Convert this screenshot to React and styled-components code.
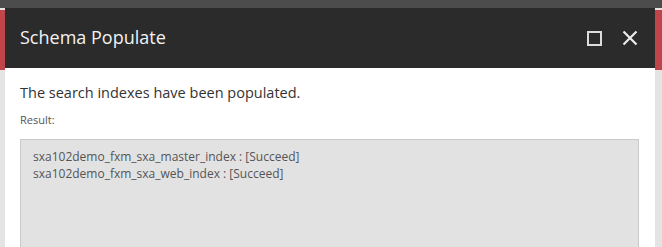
import React from "react";
import styled, { createGlobalStyle } from "styled-components";

const Global = createGlobalStyle`
  html, body { margin: 0; padding: 0; background: #fff; }
  body { width: 662px; height: 247px; overflow: hidden; font-family: "Open Sans", "Noto Sans", sans-serif; }
`;

const Page = styled.div`
  display: flex;
  flex-direction: column;
  width: 662px;
  height: 247px;
`;

const TopBar = styled.div`
  height: 8px;
  background: #4c4c4c;
  flex: none;
`;

const Row = styled.div`
  display: flex;
  flex: 1;
  min-height: 0;
`;

const Side = styled.div`
  width: ${(p) => p.$w}px;
  flex: none;
  display: flex;
  flex-direction: column;
  background: #e4e4e4;
`;

const SideRed = styled.div`
  height: 60px;
  margin-top: 2px;
  background: #c0454b;
`;

const Dialog = styled.div`
  flex: 1;
  display: flex;
  flex-direction: column;
  background: #fff;
`;

const Header = styled.div`
  height: 60px;
  background: #2b2b2b;
  display: flex;
  align-items: center;
  padding: 0 17px 0 15px;
  flex: none;
`;

const Title = styled.div`
  flex: 1;
  color: #f2f2f2;
  font-size: 18px;
  font-family: "Open Sans", sans-serif;
  margin-top: -2px;
`;

const IconBtn = styled.div`
  width: 16px;
  height: 16px;
  display: flex;
  align-items: center;
  justify-content: center;
  margin-left: ${(p) => p.$ml}px;
`;

const Body = styled.div`
  padding: 15px 16px 0 15px;
  display: flex;
  flex-direction: column;
  flex: 1;
  min-height: 0;
`;

const Message = styled.div`
  font-size: 14.5px;
  color: #333;
  line-height: 20px;
`;

const Label = styled.div`
  font-size: 11px;
  color: #555;
  margin-top: 9px;
  line-height: 15px;
`;

const ResultBox = styled.div`
  margin-top: 12px;
  flex: 1;
  background: #e2e2e2;
  border: 1px solid #cacaca;
  border-bottom: none;
  padding: 8px 12px;
  font-size: 12px;
  line-height: 17px;
  color: #555;
`;

export default function App() {
  return (
    <>
      <Global />
      <Page>
        <TopBar />
        <Row>
          <Side $w={5}>
            <SideRed />
          </Side>
          <Dialog>
            <Header>
              <Title>Schema Populate</Title>
              <IconBtn $ml={0}>
                <svg width="15" height="15" viewBox="0 0 15 15">
                  <rect x="1" y="1" width="13" height="13" fill="none" stroke="#dcdcdc" strokeWidth="2" />
                </svg>
              </IconBtn>
              <IconBtn $ml={20}>
                <svg width="16" height="16" viewBox="0 0 16 16">
                  <path d="M1.5 1.5 L14.5 14.5 M14.5 1.5 L1.5 14.5" stroke="#ececec" strokeWidth="2.2" strokeLinecap="butt" />
                </svg>
              </IconBtn>
            </Header>
            <Body>
              <Message>The search indexes have been populated.</Message>
              <Label>Result:</Label>
              <ResultBox>
                <div>sxa102demo_fxm_sxa_master_index : [Succeed]</div>
                <div>sxa102demo_fxm_sxa_web_index : [Succeed]</div>
              </ResultBox>
            </Body>
          </Dialog>
          <Side $w={7}>
            <SideRed />
          </Side>
        </Row>
      </Page>
    </>
  );
}
